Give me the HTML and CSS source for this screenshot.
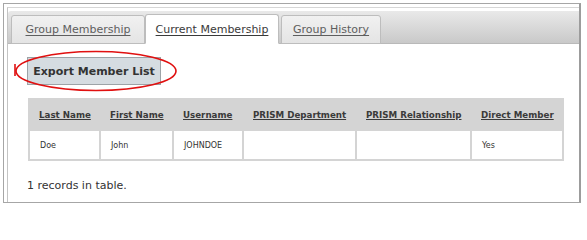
FILE: index.html
```html
<!DOCTYPE html>
<html>
<head>
<meta charset="utf-8">
<link rel="stylesheet" href="styles.css">
</head>
<body>
<div class="frame">
  <div class="panel">
    <div class="tabbar">
      <div class="tab tab-first"><span>Group Membership</span></div>
      <div class="tab tab-current"><span>Current Membership</span></div>
      <div class="tab tab-history"><span>Group History</span></div>
    </div>
    <div class="content">
      <div class="btn-wrap">
        <button class="export-btn">Export Member List</button>
        <svg class="annot" width="166" height="46" viewBox="0 0 166 46">
          <ellipse cx="83" cy="22" rx="80" ry="19.5" fill="none" stroke="#e01010" stroke-width="1.6"/>
          <line x1="2" y1="15" x2="2" y2="27" stroke="#e01010" stroke-width="1.6"/>
        </svg>
      </div>
      <table class="members">
        <colgroup>
          <col class="c1"><col class="c2"><col class="c3"><col class="c4"><col class="c5"><col class="c6">
        </colgroup>
        <thead>
          <tr>
            <th><span>Last Name</span></th>
            <th><span>First Name</span></th>
            <th><span>Username</span></th>
            <th><span>PRISM Department</span></th>
            <th><span>PRISM Relationship</span></th>
            <th><span>Direct Member</span></th>
          </tr>
        </thead>
        <tbody>
          <tr>
            <td>Doe</td>
            <td>John</td>
            <td>JOHNDOE</td>
            <td></td>
            <td></td>
            <td>Yes</td>
          </tr>
        </tbody>
      </table>
      <p class="count">1 records in table.</p>
    </div>
  </div>
</div>
</body>
</html>
```

FILE: styles.css
```css
html, body {
  margin: 0;
  padding: 0;
  background: #ffffff;
}
body {
  font-family: "DejaVu Sans", Verdana, sans-serif;
  color: #333333;
}
.frame {
  box-sizing: border-box;
  margin: 3px 0 0 3px;
  width: 578px;
  height: 200px;
  border: 1px solid #a6a6a6;
  border-right: 2px solid #9c9c9c;
  padding: 3px 0 0 3px;
}
.panel {
  box-sizing: border-box;
  height: 100%;
  border-top: 1px solid #d6d6d6;
  border-left: 1px solid #c4c4c4;
  padding-top: 3px;
}
.tabbar {
  display: flex;
  align-items: flex-end;
  height: 32px;
  padding-left: 3px;
  background: linear-gradient(#e9e9e9, #c9c9c9);
  border-bottom: 1px solid #b9b9b9;
  border-top-left-radius: 3px;
}
.tab {
  box-sizing: border-box;
  display: flex;
  align-items: center;
  justify-content: center;
  height: 29px;
  margin-bottom: -1px;
  border: 1px solid #bdbdbd;
  border-radius: 3px 3px 0 0;
  background: linear-gradient(#f1f1f1, #e4e4e4);
  font-size: 11px;
  color: #5e5e5e;
}
.tab span {
  text-decoration: underline;
  text-underline-offset: 2px;
}
.tab-first {
  width: 134px;
}
.tab-current {
  width: 134px;
  height: 30px;
  background: #ffffff;
  border-bottom-color: #ffffff;
  color: #3a3a3a;
  padding-top: 1px;
}
.tab-history {
  width: 100px;
  margin-left: 2px;
}
.content {
  padding: 13px 0 0 19px;
}
.btn-wrap {
  position: relative;
  width: 134px;
}
.export-btn {
  box-sizing: border-box;
  display: block;
  width: 134px;
  height: 28px;
  margin: 0;
  padding: 0;
  border: 1px solid #9da3a7;
  background: #d5dce1;
  font-family: "DejaVu Sans", Verdana, sans-serif;
  font-weight: bold;
  font-size: 11px;
  color: #333333;
}
.annot {
  position: absolute;
  left: -14px;
  top: -8px;
}
.members {
  margin: 13px 0 0 1px;
  width: 534px;
  table-layout: fixed;
  border-collapse: collapse;
}
.c1 { width: 71px; }
.c2 { width: 73px; }
.c3 { width: 70px; }
.c4 { width: 113px; }
.c5 { width: 115px; }
.c6 { width: 92px; }
.members th, .members td {
  border: 2px solid #d4d4d4;
  text-align: left;
  white-space: nowrap;
  overflow: hidden;
}
.members th {
  background: #d4d4d4;
  height: 29px;
  padding: 0 0 0 9px;
  font-size: 8.7px;
  font-weight: bold;
  color: #3a3a3a;
}
.members th span {
  text-decoration: underline;
  text-underline-offset: 1px;
}
.members td {
  background: #ffffff;
  height: 27px;
  padding: 1px 0 0 10px;
  font-size: 8px;
  color: #333333;
}
.count {
  margin: 18px 0 0 0;
  font-size: 11px;
  line-height: 13px;
  color: #333333;
}
```
